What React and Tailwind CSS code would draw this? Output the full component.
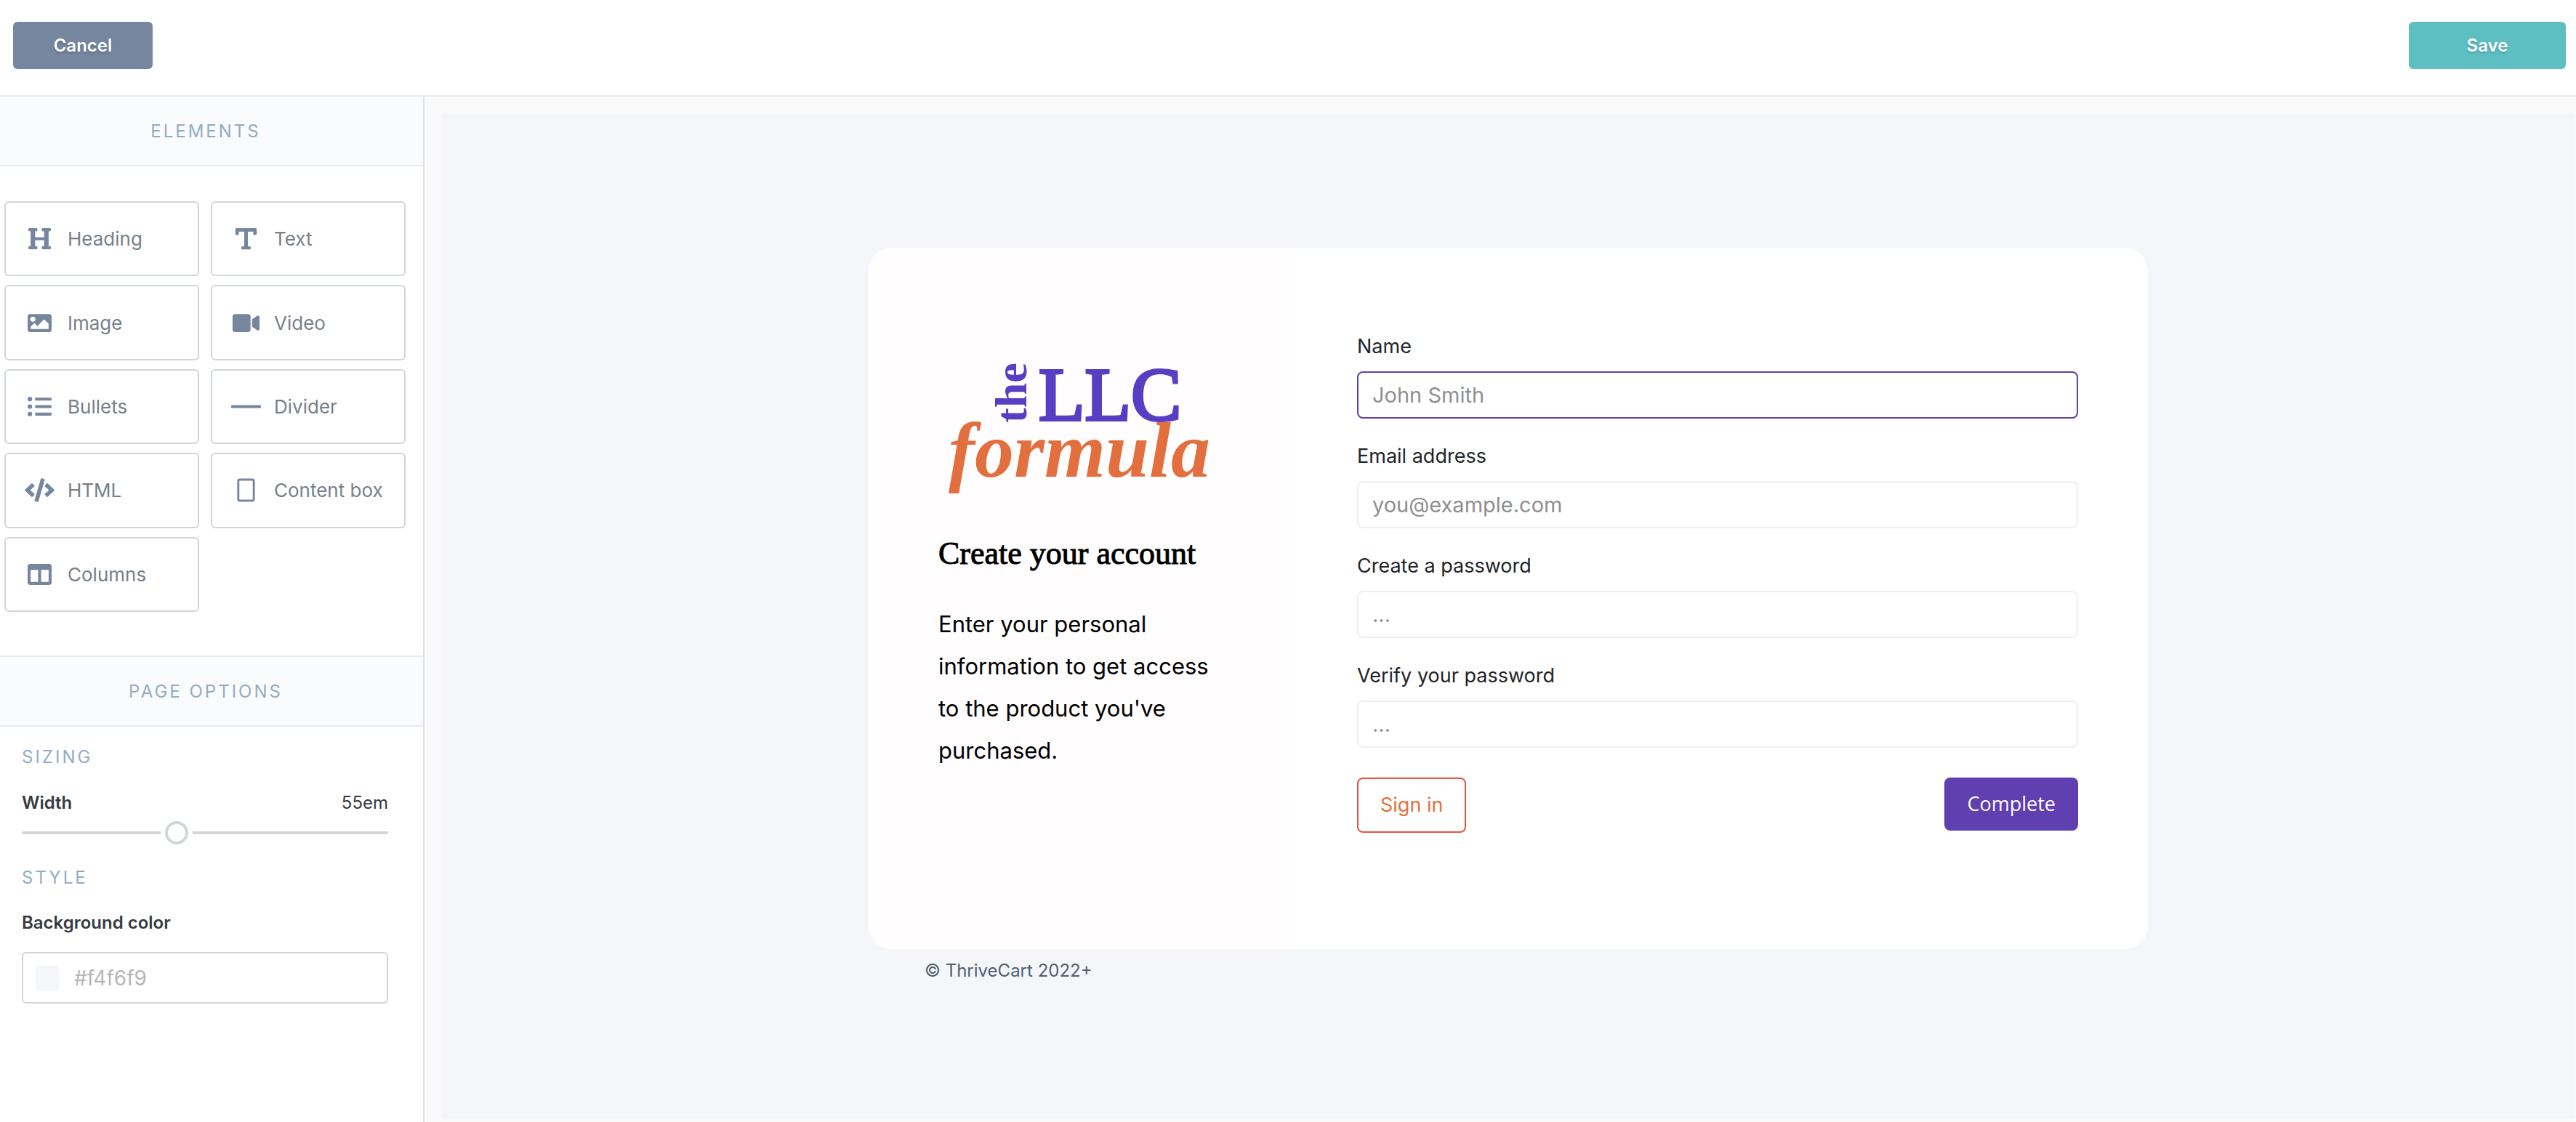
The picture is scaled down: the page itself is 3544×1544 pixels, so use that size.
import { useState } from 'react';
import { FaHeading, FaImage, FaVideo, FaListUl, FaCode, FaColumns } from 'react-icons/fa';

const TextIcon = (props) => (
    <svg viewBox="0 0 32 32" fill="currentColor" {...props}>
        <path d="M3 2h26a1.2 1.2 0 0 1 1.2 1.2v6.6a1.2 1.2 0 0 1-1.2 1.2h-2.2a1.2 1.2 0 0 1-1.2-1.2V6.600h-7.200v19.600h2.600a1.200 1.200 0 0 1 1.200 1.200v1.800a1.200 1.200 0 0 1-1.200 1.200h-10a1.200 1.200 0 0 1-1.200-1.200v-1.800a1.200 1.200 0 0 1 1.200-1.200h2.600V6.600H6.400v3.200A1.200 1.200 0 0 1 5.200 11H3a1.200 1.200 0 0 1-1.200-1.200V3.200A1.200 1.200 0 0 1 3 2z" />
    </svg>
);

const DividerIcon = (props) => (
    <svg viewBox="0 0 41 32" fill="currentColor" {...props}>
        <rect x="0" y="14" width="41" height="4" rx="1" />
    </svg>
);

const BoxIcon = (props) => (
    <svg viewBox="0 0 26 34" fill="none" stroke="currentColor" strokeWidth="3" {...props}>
        <rect x="2" y="2" width="22" height="30" rx="2" />
    </svg>
);

const elements = [
    { label: 'Heading', icon: FaHeading },
    { label: 'Text', icon: TextIcon },
    { label: 'Image', icon: FaImage },
    { label: 'Video', icon: FaVideo },
    { label: 'Bullets', icon: FaListUl },
    { label: 'Divider', icon: DividerIcon },
    { label: 'HTML', icon: FaCode },
    { label: 'Content box', icon: BoxIcon },
    { label: 'Columns', icon: FaColumns },
];

const fields = [
    { id: 'name', label: 'Name', type: 'text', placeholder: 'John Smith', active: true },
    { id: 'email', label: 'Email address', type: 'email', placeholder: 'you@example.com' },
    { id: 'password', label: 'Create a password', type: 'password', placeholder: '...' },
    { id: 'verify', label: 'Verify your password', type: 'password', placeholder: '...' },
];

const Logo = () => (
    <svg viewBox="0 0 384 200" className="w-full overflow-visible" role="img" aria-label="the LLC formula">
        <g fontFamily="'Liberation Serif', serif">
            <text x="121" y="92" transform="rotate(-90 121 92)" fontSize="62" fontWeight="700" fill="#583ec2">the</text>
            <text x="138" y="88" fontSize="104" fill="#583ec2" stroke="#583ec2" strokeWidth="4">LLC</text>
            <text x="14" y="166" fontSize="108" fontWeight="700" fontStyle="italic" fill="#e26f3d">formula</text>
        </g>
    </svg>
);

const SectionHeader = ({ children }) => (
    <h2 className="border-b-2 border-[#e8ebf1] bg-[#fafbfd] pt-8 pr-4 pb-[30px] text-center text-2xl leading-8 tracking-[3px] text-[#93acc6] uppercase">
        {children}
    </h2>
);

const Sidebar = () => {
    const [width, setWidth] = useState(55);
    const [color, setColor] = useState('#f4f6f9');

    return (
        <aside className="w-[584px] shrink-0 border-r-2 border-[#dfe0e6] bg-white">
            <SectionHeader>Elements</SectionHeader>
            <div className="grid h-[565px] grid-cols-2 grid-rows-5 gap-x-4 gap-y-3 mt-12 mr-6 ml-[6px]">
                {elements.map(({ label, icon: Icon }) => (
                    <button
                        key={label}
                        type="button"
                        className="flex items-center gap-[18px] rounded-md border-2 border-[#d0d6da] bg-white pl-[26px] text-[26px] text-[#77808c]"
                    >
                        <Icon className="h-[33px] w-[41px] shrink-0 text-[#76869e]" />
                        {label}
                    </button>
                ))}
            </div>

            <div className="mt-[60px] border-t-2 border-[#e8ebf1]">
                <SectionHeader>Page options</SectionHeader>
            </div>
            <div className="pt-[26px] pr-12 pl-[30px] text-2xl leading-8 text-[#363a40]">
                <h3 className="tracking-[3px] text-[#93acc6] uppercase">Sizing</h3>
                <div className="mt-[31px] flex justify-between">
                    <label htmlFor="width" className="font-semibold">Width</label>
                    <output htmlFor="width">{width}em</output>
                </div>
                <input
                    id="width"
                    type="range"
                    min="30"
                    max="90"
                    value={width}
                    onChange={(e) => setWidth(Number(e.target.value))}
                    className="mt-[9px] block h-8 w-full appearance-none bg-transparent [&::-webkit-slider-runnable-track]:h-1 [&::-webkit-slider-runnable-track]:rounded-full [&::-webkit-slider-runnable-track]:bg-[#d0d6da] [&::-webkit-slider-thumb]:-mt-[14px] [&::-webkit-slider-thumb]:size-8 [&::-webkit-slider-thumb]:appearance-none [&::-webkit-slider-thumb]:rounded-full [&::-webkit-slider-thumb]:border-4 [&::-webkit-slider-thumb]:border-[#d0d6da] [&::-webkit-slider-thumb]:bg-white [&::-webkit-slider-thumb]:shadow-[0_0_0_6px_white]"
                />
                <h3 className="mt-[30px] tracking-[3px] text-[#93acc6] uppercase">Style</h3>
                <label htmlFor="background" className="mt-[30px] block font-semibold">Background color</label>
                <div className="mt-6 flex h-[71px] items-center gap-5 rounded-md border-2 border-[#d0d6da] px-4">
                    <span className="size-[34px] rounded-md" style={{ backgroundColor: color }} />
                    <input
                        id="background"
                        value={color}
                        onChange={(e) => setColor(e.target.value)}
                        className="min-w-0 flex-1 text-[28px] text-[#b5b5b5] outline-none"
                    />
                </div>
            </div>
        </aside>
    );
};

const SignupForm = () => (
    <form className="flex-1 px-24 pt-[116px] pb-40" onSubmit={(e) => e.preventDefault()}>
        <div className="space-y-8">
            {fields.map((field) => (
                <div key={field.id}>
                    <label htmlFor={field.id} className="block text-[27px] leading-10 text-[#222427]">
                        {field.label}
                    </label>
                    <input
                        id={field.id}
                        type={field.type}
                        placeholder={field.placeholder}
                        className={`mt-[14px] block h-[65px] w-full rounded-lg border-2 bg-white px-[19px] text-[29px] outline-none placeholder:text-[#8f8f8f] ${field.active ? 'border-[#603fb0]' : 'border-[#eeeef4]'}`}
                    />
                </div>
            ))}
        </div>
        <div className="mt-[41px] flex items-start justify-between">
            <button type="button" className="h-[76px] rounded-lg border-2 border-[#e15443] px-[30px] text-[27px] text-[#e2723f]">
                Sign in
            </button>
            <button type="submit" className="h-[73px] rounded-lg bg-[#603fb0] px-[31px] font-['Open_Sans',sans-serif] text-[27px] text-white">
                Complete
            </button>
        </div>
    </form>
);

const App = () => (
    <div className="flex min-h-screen flex-col bg-[#f9f9f9] font-['Inter',sans-serif]">
        <header className="flex justify-between border-b-2 border-[#e8edf1] bg-white pt-[30px] pr-[14px] pb-9 pl-[18px]">
            <button type="button" className="h-[65px] w-48 rounded-md bg-[#76869e] text-2xl font-semibold text-white [text-shadow:0_2px_3px_rgba(0,0,0,0.2)]">
                Cancel
            </button>
            <button type="button" className="h-[65px] w-[216px] rounded-md bg-[#5dbfc2] text-2xl font-semibold text-white [text-shadow:0_2px_3px_rgba(0,0,0,0.2)]">
                Save
            </button>
        </header>

        <div className="flex flex-1">
            <Sidebar />
            <main className="mt-6 mr-[2px] mb-1 ml-6 flex-1 bg-[#f4f6fa] px-8 pt-[184px]">
                <div className="mx-auto max-w-[1760px]">
                    <div className="flex overflow-hidden rounded-4xl bg-white">
                        <section className="w-[576px] shrink-0 bg-[#fffdfe] px-24 pt-[149px] text-black">
                            <Logo />
                            <h1 className="mt-11 font-['Liberation_Serif',serif] text-[44px] leading-[56px] whitespace-nowrap [-webkit-text-stroke:1px_black]">
                                Create your account
                            </h1>
                            <p className="mt-10 text-[31px] leading-[58px]">
                                Enter your personal information to get access to the product you've purchased.
                            </p>
                        </section>
                        <SignupForm />
                    </div>
                    <p className="mt-3 pl-[77px] text-2xl leading-9 text-[#4d5e73]">© ThriveCart 2022+</p>
                </div>
            </main>
        </div>
    </div>
);

export default App;
